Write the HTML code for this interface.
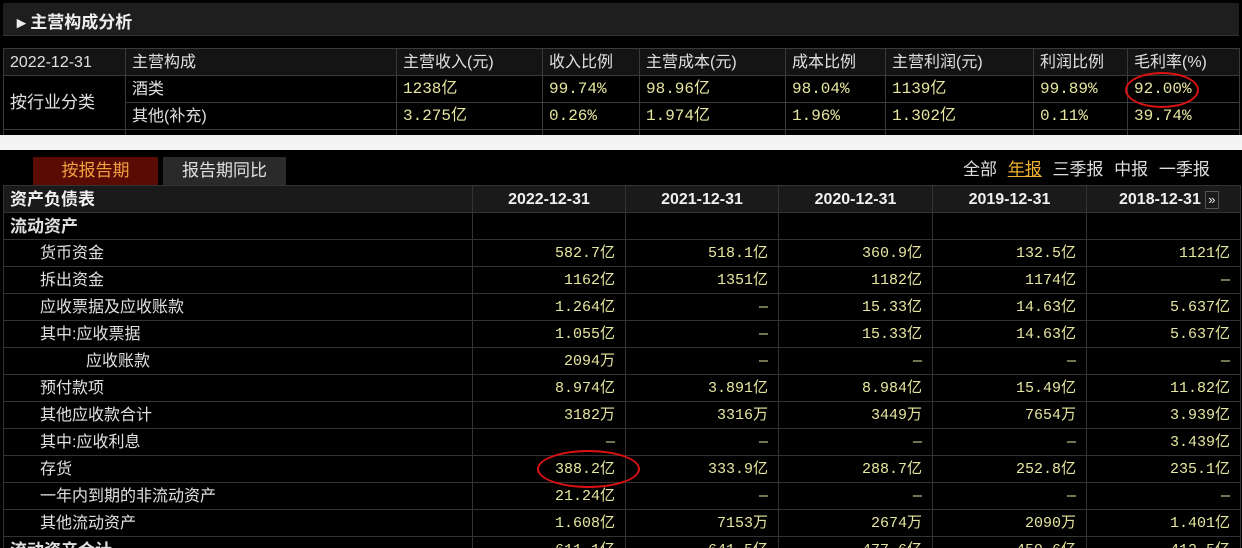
<!DOCTYPE html>
<html style="width:1242px;height:548px;overflow:hidden"><head><meta charset="utf-8"><style>
*{margin:0;padding:0;box-sizing:border-box}
body{width:1242px;height:548px;background:#000;overflow:hidden;position:relative;font-family:"Liberation Sans","Noto Sans CJK SC","WenQuanYi Zen Hei",sans-serif;color:#e0e0e0;font-size:16px}
.hd{position:absolute;left:3px;top:3px;width:1236px;height:33px;background:#1e1e1e;border-bottom:1px solid #333}
.hd span{position:absolute;left:14px;top:5px;font-size:17px;font-weight:bold;color:#eee}
table{position:absolute;border-collapse:collapse;table-layout:fixed}
td{border:1px solid #3a3a3a;height:27px;padding:0 6px;white-space:nowrap;overflow:hidden;line-height:25px}
.t1{left:3px;top:48px}
.t1 td{color:#e0e0e0;font-size:16px}
.y{color:#e6e6a0 !important;font-family:"Liberation Mono","Noto Sans CJK SC",monospace;font-size:15px}
.gap{position:absolute;left:0;top:135px;width:1242px;height:15px;background:#f4f4f4;z-index:5}
.cov{position:absolute;left:0;top:150px;width:1242px;height:7px;background:#000;z-index:5}
.tab{position:absolute;top:157px;height:28px;font-size:17px;text-align:center;line-height:28px}
.t2{left:3px;top:185px}
.t2 td{border-color:#333;font-size:16px}
.t2 td.y{font-size:15px}
.t2 tr.h td{background:#1a1a1a;font-weight:bold;color:#f0f0f0;text-align:center}
.t2 td.r{text-align:right;padding-right:10px}
.links{position:absolute;top:155px;left:963px;font-size:17px;color:#ddd;word-spacing:6px;z-index:6}
.circ{position:absolute;border:2.5px solid #d11;border-radius:50%}
</style></head><body>
<div class="hd"><span>▸ 主营构成分析</span></div>
<table class="t1">
<colgroup><col style="width:122px"><col style="width:271px"><col style="width:146px"><col style="width:97px"><col style="width:146px"><col style="width:100px"><col style="width:148px"><col style="width:94px"><col style="width:112px"></colgroup>
<tr style="background:#141414"><td>2022-12-31</td><td>主营构成</td><td>主营收入(元)</td><td>收入比例</td><td>主营成本(元)</td><td>成本比例</td><td>主营利润(元)</td><td>利润比例</td><td>毛利率(%)</td></tr>
<tr><td rowspan="2" style="font-size:17px">按行业分类</td><td>酒类</td><td class="y">1238亿</td><td class="y">99.74%</td><td class="y">98.96亿</td><td class="y">98.04%</td><td class="y">1139亿</td><td class="y">99.89%</td><td class="y">92.00%</td></tr>
<tr><td>其他(补充)</td><td class="y">3.275亿</td><td class="y">0.26%</td><td class="y">1.974亿</td><td class="y">1.96%</td><td class="y">1.302亿</td><td class="y">0.11%</td><td class="y">39.74%</td></tr>
<tr><td></td><td></td><td></td><td></td><td></td><td></td><td></td><td></td><td></td></tr>
</table>
<div class="gap"></div>
<div class="cov"></div>
<div class="circ" style="left:1125px;top:72px;width:74px;height:36px"></div>
<div class="tab" style="left:33px;width:125px;background:#5a0c04;color:#f0a040">按报告期</div>
<div class="tab" style="left:163px;width:123px;background:#2a2a2a;color:#e0e0e0">报告期同比</div>
<div class="links">全部 <span style="color:#f0b030;text-decoration:underline">年报</span> 三季报 中报 一季报</div>
<table class="t2">
<colgroup><col style="width:469px"><col style="width:153px"><col style="width:153px"><col style="width:154px"><col style="width:154px"><col style="width:154px"></colgroup>
<tr class="h"><td style="text-align:left;font-size:17px">资产负债表</td><td>2022-12-31</td><td>2021-12-31</td><td>2020-12-31</td><td>2019-12-31</td><td style="text-align:left;padding-left:32px">2018-12-31 <span style="display:inline-block;border:1px solid #555;font-size:13px;line-height:16px;padding:0 2px;font-weight:normal">»</span></td></tr>
<tr><td style="font-weight:bold;font-size:17px">流动资产</td><td></td><td></td><td></td><td></td><td></td></tr>
<tr><td style="padding-left:36px">货币资金</td><td class="r y">582.7亿</td><td class="r y">518.1亿</td><td class="r y">360.9亿</td><td class="r y">132.5亿</td><td class="r y">1121亿</td></tr>
<tr><td style="padding-left:36px">拆出资金</td><td class="r y">1162亿</td><td class="r y">1351亿</td><td class="r y">1182亿</td><td class="r y">1174亿</td><td class="r y">—</td></tr>
<tr><td style="padding-left:36px">应收票据及应收账款</td><td class="r y">1.264亿</td><td class="r y">—</td><td class="r y">15.33亿</td><td class="r y">14.63亿</td><td class="r y">5.637亿</td></tr>
<tr><td style="padding-left:36px">其中:应收票据</td><td class="r y">1.055亿</td><td class="r y">—</td><td class="r y">15.33亿</td><td class="r y">14.63亿</td><td class="r y">5.637亿</td></tr>
<tr><td style="padding-left:82px">应收账款</td><td class="r y">2094万</td><td class="r y">—</td><td class="r y">—</td><td class="r y">—</td><td class="r y">—</td></tr>
<tr><td style="padding-left:36px">预付款项</td><td class="r y">8.974亿</td><td class="r y">3.891亿</td><td class="r y">8.984亿</td><td class="r y">15.49亿</td><td class="r y">11.82亿</td></tr>
<tr><td style="padding-left:36px">其他应收款合计</td><td class="r y">3182万</td><td class="r y">3316万</td><td class="r y">3449万</td><td class="r y">7654万</td><td class="r y">3.939亿</td></tr>
<tr><td style="padding-left:36px">其中:应收利息</td><td class="r y">—</td><td class="r y">—</td><td class="r y">—</td><td class="r y">—</td><td class="r y">3.439亿</td></tr>
<tr><td style="padding-left:36px">存货</td><td class="r y">388.2亿</td><td class="r y">333.9亿</td><td class="r y">288.7亿</td><td class="r y">252.8亿</td><td class="r y">235.1亿</td></tr>
<tr><td style="padding-left:36px">一年内到期的非流动资产</td><td class="r y">21.24亿</td><td class="r y">—</td><td class="r y">—</td><td class="r y">—</td><td class="r y">—</td></tr>
<tr><td style="padding-left:36px">其他流动资产</td><td class="r y">1.608亿</td><td class="r y">7153万</td><td class="r y">2674万</td><td class="r y">2090万</td><td class="r y">1.401亿</td></tr>
<tr><td style="font-weight:bold;font-size:17px">流动资产合计</td><td class="r y">611.1亿</td><td class="r y">641.5亿</td><td class="r y">477.6亿</td><td class="r y">459.6亿</td><td class="r y">412.5亿</td></tr>
</table>
<div class="circ" style="left:537px;top:450px;width:103px;height:38px"></div>
</body></html>
